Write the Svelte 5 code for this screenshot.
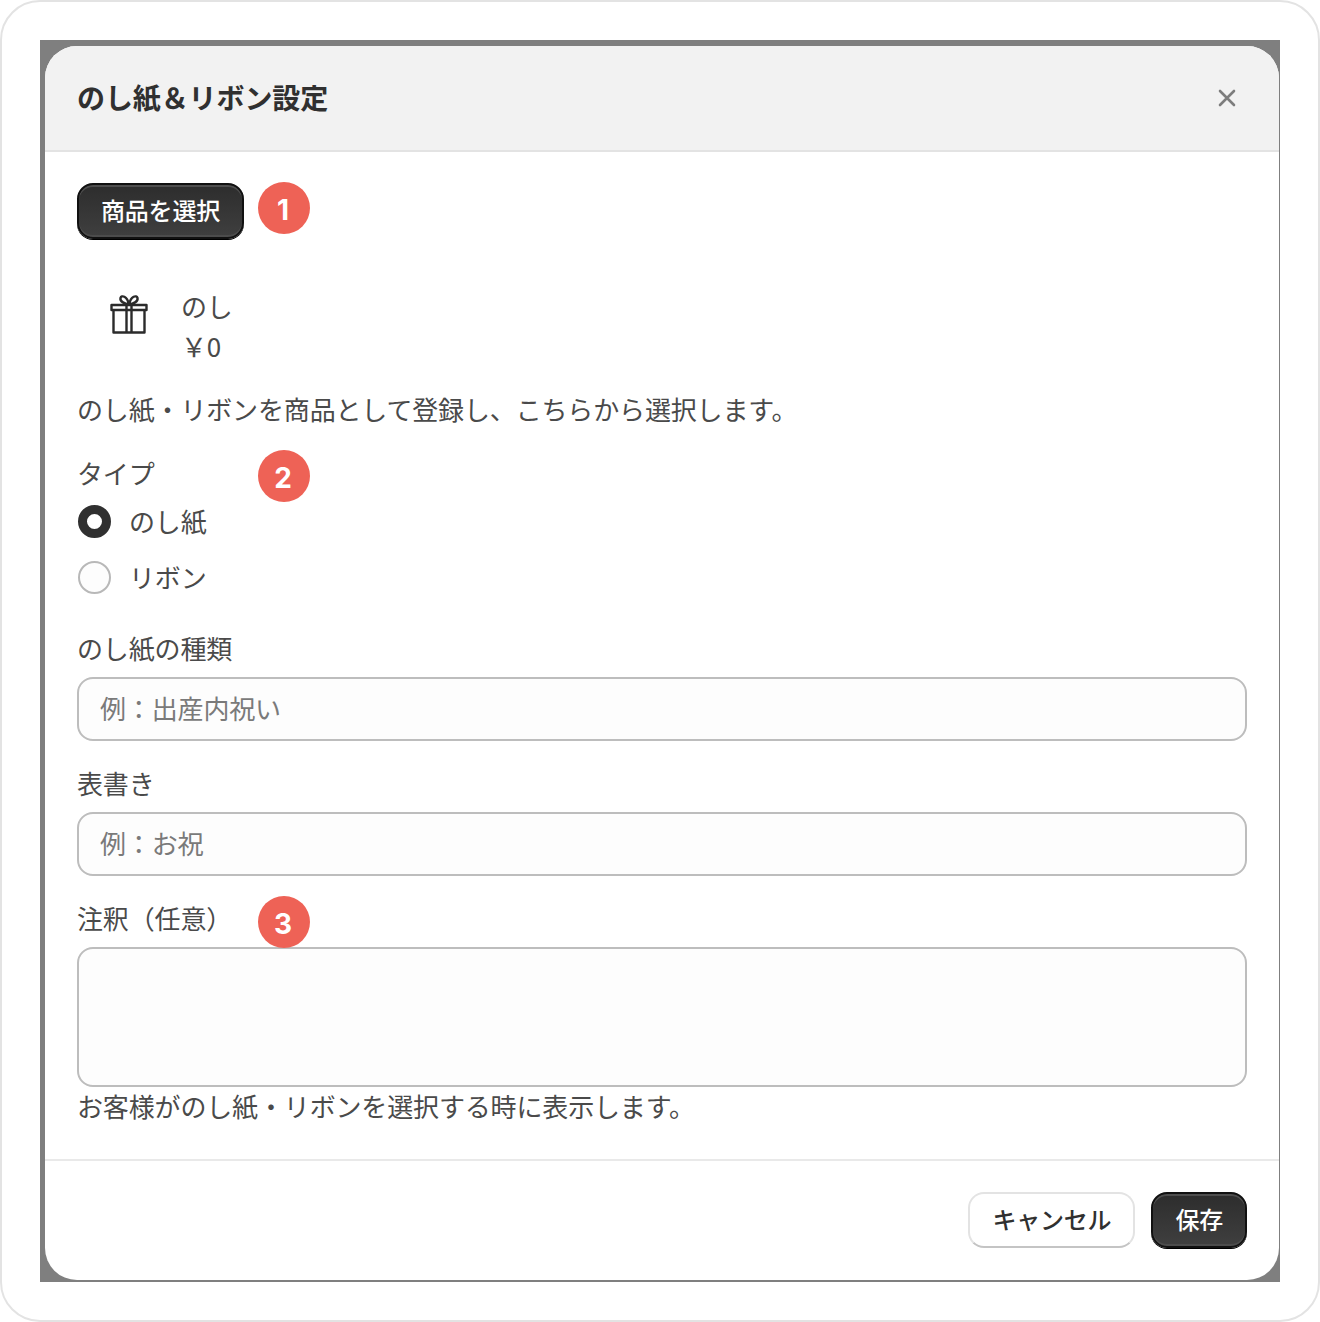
<script>
  let type = "noshi";
</script>

<div class="frame">
  <div class="backdrop">
    <div class="modal">
      <header class="head">
        <h1>のし紙＆リボン設定</h1>
        <svg class="close" width="20" height="20" viewBox="0 0 20 20" fill="none" stroke="#7d7d7d" stroke-width="2.6" stroke-linecap="round">
          <path d="M3 3l14 14M17 3L3 17" />
        </svg>
      </header>

      <div class="body">
        <div class="pick">
          <button class="btn dark">商品を選択</button>
          <span class="badge b1">1</span>
        </div>

        <div class="item">
          <svg class="gift" width="40" height="40" viewBox="0 0 40 40" fill="none" stroke="#2b2b2b" stroke-width="2.4" stroke-linejoin="round">
            <path d="M2.500 11h35v5h-35z" />
            <path d="M4.500 16v22.500h31V16" />
            <path d="M17.500 11v27.500M22.500 11v27.500" />
            <path d="M20 10.500C16 10 10.500 7.500 11.500 4 12.500 1 18 1.500 20 10.500zM20 10.500c4-.5 9.500-3 8.500-6.500C27.500 1 22 1.500 20 10.500z" />
          </svg>
          <div class="itemtext">
            <div>のし</div>
            <div>￥0</div>
          </div>
        </div>

        <p class="desc">のし紙・リボンを商品として登録し、こちらから選択します。</p>

        <div class="typeblock">
          <div class="typelabel">タイプ</div>
          <span class="badge b2">2</span>
          <label class="radio">
            <input type="radio" bind:group={type} value="noshi" />
            <span>のし紙</span>
          </label>
          <label class="radio">
            <input type="radio" bind:group={type} value="ribbon" />
            <span>リボン</span>
          </label>
        </div>

        <div class="field first">
          <label for="kind">のし紙の種類</label>
          <input id="kind" class="text" placeholder="例：出産内祝い" />
        </div>

        <div class="field">
          <label for="omote">表書き</label>
          <input id="omote" class="text" placeholder="例：お祝" />
        </div>

        <div class="field">
          <label for="note">注釈（任意）</label>
          <span class="badge b3">3</span>
          <textarea id="note" class="text area"></textarea>
          <div class="help">お客様がのし紙・リボンを選択する時に表示します。</div>
        </div>
      </div>

      <footer class="foot">
        <button class="btn light">キャンセル</button>
        <button class="btn dark">保存</button>
      </footer>
    </div>
  </div>
</div>

<style>
  :global(body) {
    margin: 0;
    background: #fff;
  }

  .frame {
    box-sizing: border-box;
    width: 1320px;
    height: 1322px;
    padding: 38px;
    border: 2px solid #e3e3e3;
    border-radius: 40px;
    font-family: "Noto Sans CJK JP", "Noto Sans", sans-serif;
    font-size: 26px;
    letter-spacing: -0.15px;
    color: #303030;
  }

  .backdrop {
    width: 1240px;
    height: 1242px;
    box-sizing: border-box;
    padding: 6px 1px 2px 5px;
    background: #7f7f7f;
  }

  .modal {
    height: 100%;
    display: flex;
    flex-direction: column;
    background: #fff;
    border-radius: 32px;
    overflow: hidden;
  }

  .head {
    display: flex;
    align-items: center;
    justify-content: space-between;
    box-sizing: border-box;
    height: 106px;
    padding: 0 42px 0 32px;
    background: #f2f2f2;
    border-bottom: 2px solid #e3e3e3;
  }

  h1 {
    margin: 0 0 2px;
    font-size: 28px;
    font-weight: 600;
    line-height: 40px;
    letter-spacing: -0.1px;
  }

  .body {
    flex: 1;
    padding: 31px 32px 0 32px;
  }

  .btn {
    box-sizing: border-box;
    height: 56px;
    padding: 0 22px 2px;
    border-radius: 16px;
    font-family: inherit;
    font-size: 24px;
    font-weight: 500;
    letter-spacing: -0.2px;
    line-height: 1;
  }

  .dark {
    color: #fff;
    background: linear-gradient(#2d2d2d, #3f3f3f);
    border: 2px solid #111;
    box-shadow: inset 0 2px 0 #4e4e4e, inset 0 -2px 0 #4c4c4c, 0 1px 0 #000;
  }

  .light {
    color: #303030;
    background: #fff;
    border: 2px solid #e3e3e3;
    border-bottom-color: #c4c4c4;
  }

  .pick {
    display: flex;
    align-items: flex-start;
    gap: 14px;
  }

  .badge {
    display: flex;
    align-items: center;
    justify-content: center;
    box-sizing: border-box;
    width: 52px;
    height: 52px;
    padding: 3px 2px 0 0;
    border-radius: 50%;
    background: #ee6256;
    color: #fff;
    font-family: Inter, "Liberation Sans", sans-serif;
    font-size: 28px;
    font-weight: 700;
  }

  .b1 {
    margin-top: -1px;
  }

  .b2,
  .b3 {
    position: absolute;
    left: 181px;
    top: -3px;
  }

  .item {
    display: flex;
    align-items: center;
    gap: 32px;
    margin-top: 35px;
    padding-left: 32px;
    height: 100px;
  }

  .gift {
    margin-bottom: 20px;
  }

  .itemtext {
    padding-top: 3px;
    line-height: 40px;
    color: #4a4a4a;
  }

  .desc {
    margin: 15px 0 0;
    line-height: 40px;
    color: #4a4a4a;
  }

  .typeblock {
    position: relative;
    margin-top: 24px;
    padding-left: 1px;
  }

  .typelabel {
    margin-left: -1px;
    line-height: 40px;
    color: #4a4a4a;
  }

  .radio {
    display: flex;
    align-items: center;
    gap: 18px;
    height: 56px;
    color: #4a4a4a;
  }

  .radio span {
    padding-bottom: 2px;
  }

  .radio input {
    appearance: none;
    flex: none;
    box-sizing: border-box;
    width: 33px;
    height: 33px;
    margin: 0;
    border: 2px solid #b8b8b8;
    border-radius: 50%;
    background: #fdfdfd;
  }

  .radio input:checked {
    border: 9px solid #303030;
    background: #fff;
  }

  .field {
    position: relative;
    margin-top: 23px;
  }

  .first {
    margin-top: 24px;
  }

  .field label {
    display: block;
    line-height: 38px;
    margin-bottom: 10px;
    color: #4a4a4a;
  }

  .text {
    display: block;
    box-sizing: border-box;
    width: 100%;
    height: 64px;
    padding: 0 21px 3px;
    border: 2px solid #bdbdbd;
    border-radius: 16px;
    background: #fdfdfd;
    font-family: inherit;
    font-size: 26px;
    letter-spacing: -0.15px;
    color: #303030;
  }

  .text::placeholder {
    color: #7a7a7a;
    opacity: 1;
  }

  .area {
    height: 140px;
    resize: none;
  }

  .help {
    line-height: 38px;
    color: #4a4a4a;
  }

  .foot {
    display: flex;
    justify-content: flex-end;
    gap: 16px;
    box-sizing: border-box;
    height: 121px;
    padding: 31px 32px 0 0;
    border-top: 2px solid #e9e9e9;
  }
</style>
